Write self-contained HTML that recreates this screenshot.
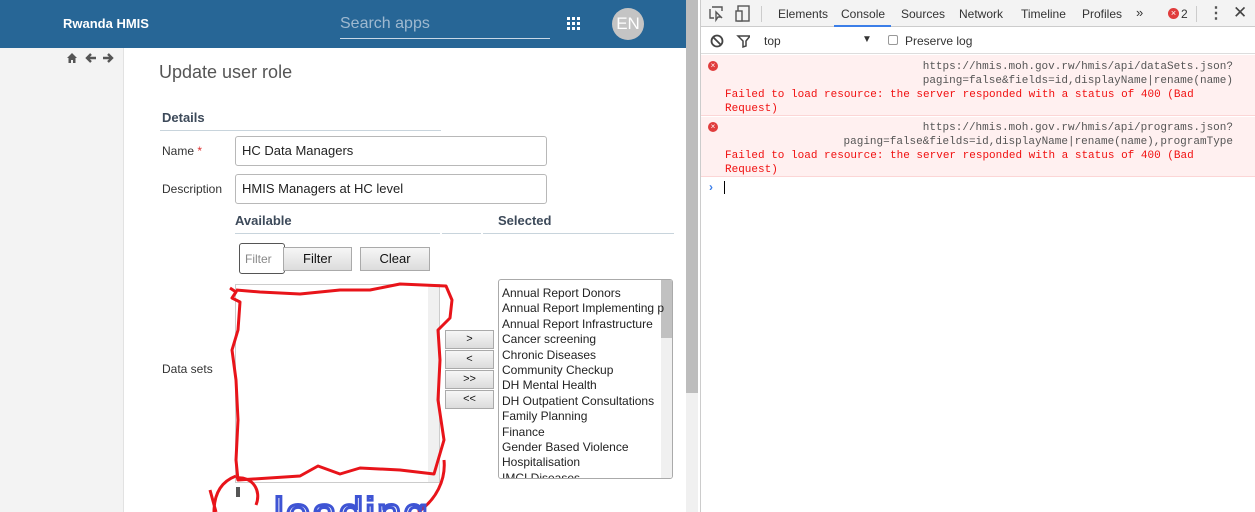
<!DOCTYPE html>
<html><head><style>
*{box-sizing:border-box;margin:0;padding:0}
body{width:1255px;height:512px;overflow:hidden;font-family:"Liberation Sans",sans-serif;background:#fff;position:relative}
.a{position:absolute}
.inp{position:absolute;border:1px solid #b8b8b8;border-radius:3px;background:#fff;font-size:13px;padding-left:6px;line-height:28px;color:#222}
.btn{position:absolute;border:1px solid #aaa;background:linear-gradient(#f6f6f6,#dcdcdc);font-size:13px;text-align:center;color:#111}
.mono{font-family:"Liberation Mono",monospace;font-size:11px}
</style></head><body>
<div class="a" style="left:0;top:0;width:686px;height:48px;background:#276696"></div>
<div class="a" style="left:63px;top:16px;color:#fff;font-weight:bold;font-size:13px">Rwanda HMIS</div>
<div class="a" style="left:340px;top:15px;color:#9fb9d0;font-size:16px">Search apps</div>
<div class="a" style="left:340px;top:38px;width:210px;height:1px;background:#c9d8e6"></div>
<svg class="a" style="left:566px;top:16px" width="16" height="16"><g fill="#fff"><rect x="1" y="1" width="3" height="3"/><rect x="6" y="1" width="3" height="3"/><rect x="11" y="1" width="3" height="3"/><rect x="1" y="6" width="3" height="3"/><rect x="6" y="6" width="3" height="3"/><rect x="11" y="6" width="3" height="3"/><rect x="1" y="11" width="3" height="3"/><rect x="6" y="11" width="3" height="3"/><rect x="11" y="11" width="3" height="3"/></g></svg>
<div class="a" style="left:612px;top:8px;width:32px;height:32px;border-radius:50%;background:#c4c4c4;color:#fff;font-size:17px;text-align:center;line-height:32px">EN</div>
<div class="a" style="left:0;top:48px;width:124px;height:464px;background:#f3f3f3;border-right:1px solid #e2e2e2"></div>
<svg class="a" style="left:66px;top:52px" width="52" height="12"><path d="M1 6 L6 1 L11 6 H9.5 V11 H7 V8 H5 V11 H2.5 V6 Z" fill="#555"/><path d="M30 6 H21 M25 2 L21 6 L25 10" fill="none" stroke="#555" stroke-width="2.4"/><path d="M37 6 H46 M42 2 L46 6 L42 10" fill="none" stroke="#555" stroke-width="2.4"/></svg>
<div class="a" style="left:686px;top:0;width:12px;height:512px;background:#f0f0f0"></div>
<div class="a" style="left:686px;top:0;width:12px;height:393px;background:#bdbdbd"></div>
<div class="a" style="left:698px;top:0;width:2px;height:512px;background:#fff"></div>
<div class="a" style="left:700px;top:0;width:1px;height:512px;background:#ccc"></div>
<div class="a" style="left:159px;top:62px;font-size:18px;color:#555">Update user role</div>
<div class="a" style="left:162px;top:110px;font-size:13px;font-weight:bold;color:#3d4a5a">Details</div>
<div class="a" style="left:160px;top:130px;width:281px;height:1px;background:#c8d4dc"></div>
<div class="a" style="left:162px;top:144px;font-size:12px;color:#333">Name <span style="color:#d33">*</span></div>
<div class="inp" style="left:235px;top:136px;width:312px;height:30px">HC Data Managers</div>
<div class="a" style="left:162px;top:182px;font-size:12px;color:#333">Description</div>
<div class="inp" style="left:235px;top:174px;width:312px;height:30px">HMIS Managers at HC level</div>
<div class="a" style="left:235px;top:213px;font-size:13px;font-weight:bold;color:#3d4a5a">Available</div>
<div class="a" style="left:498px;top:213px;font-size:13px;font-weight:bold;color:#3d4a5a">Selected</div>
<div class="a" style="left:235px;top:233px;width:205px;height:1px;background:#c8d4dc"></div>
<div class="a" style="left:442px;top:233px;width:39px;height:1px;background:#c8d4dc"></div>
<div class="a" style="left:483px;top:233px;width:191px;height:1px;background:#c8d4dc"></div>
<div class="inp" style="left:239px;top:243px;width:46px;height:31px;color:#888;padding-left:5px;line-height:30px;font-size:12px;border-color:#555">Filter</div>
<div class="btn" style="left:283px;top:247px;width:69px;height:24px;line-height:22px">Filter</div>
<div class="btn" style="left:360px;top:247px;width:70px;height:24px;line-height:22px">Clear</div>
<div class="a" style="left:162px;top:362px;font-size:12px;color:#333">Data sets</div>
<div class="a" style="left:235px;top:284px;width:205px;height:199px;border:1px solid #ccc;background:#fff"></div>
<div class="a" style="left:428px;top:285px;width:11px;height:197px;background:#f0f0f0"></div>
<div class="a" style="left:236px;top:487px;width:4px;height:10px;background:#555"></div>
<div class="btn" style="left:445px;top:330px;width:49px;height:19px;line-height:17px;font-size:11px">&gt;</div>
<div class="btn" style="left:445px;top:350px;width:49px;height:19px;line-height:17px;font-size:11px">&lt;</div>
<div class="btn" style="left:445px;top:370px;width:49px;height:19px;line-height:17px;font-size:11px">&gt;&gt;</div>
<div class="btn" style="left:445px;top:390px;width:49px;height:19px;line-height:17px;font-size:11px">&lt;&lt;</div>
<div class="a" style="left:498px;top:279px;width:175px;height:200px;border:1px solid #aaa;border-radius:3px;overflow:hidden;background:#fff">
<div style="position:absolute;right:0;top:0;width:11px;height:200px;background:#f0f0f0"></div>
<div style="position:absolute;right:0;top:0;width:11px;height:58px;background:#c1c1c1"></div>
<div style="position:absolute;left:3px;top:6px;width:162px;overflow:hidden;white-space:nowrap;font-size:12px;line-height:15.4px;color:#222">Annual Report Donors<br>Annual Report Implementing partners<br>Annual Report Infrastructure<br>Cancer screening<br>Chronic Diseases<br>Community Checkup<br>DH Mental Health<br>DH Outpatient Consultations<br>Family Planning<br>Finance<br>Gender Based Violence<br>Hospitalisation<br>IMCI Diseases</div></div>
<svg class="a" style="left:0;top:0" width="700" height="512">
<path d="M230 288 L236 292 L232 298 L240 302 L238 330 L232 350 L236 380 L238 420 L236 460 L238 480 L300 476 L318 466 L340 474 L360 468 L400 470 L434 474 L444 440 L438 400 L440 360 L438 330 L450 318 L452 300 L446 286 L400 284 L370 290 L340 290 L300 294 L260 292 L236 290" fill="none" stroke="#e8141a" stroke-width="3" stroke-linejoin="round"/>
<path d="M236 478 C252 476 262 490 256 505 M236 476 C220 482 214 495 214 512 M210 490 L216 512" fill="none" stroke="#e8141a" stroke-width="3"/>
<path d="M444 460 C446 480 436 500 418 512" fill="none" stroke="#e8141a" stroke-width="3"/>
<text x="274" y="528" font-family="Liberation Sans,sans-serif" font-size="44" fill="none" stroke="#3e54d4" stroke-width="3" letter-spacing="2">loading</text>
</svg>
<div class="a" style="left:701px;top:0;width:554px;height:27px;background:#f3f3f3;border-bottom:1px solid #ccc"></div>
<svg class="a" style="left:708px;top:5px" width="45" height="18"><path d="M4 2 H14 V6 M2 4 V13 H6 M8 7 L14 13 M8 7 L8 15 L10 12 L13 12 Z" fill="none" stroke="#555" stroke-width="1.4"/><rect x="30" y="1" width="11" height="15" fill="none" stroke="#555" stroke-width="1.4"/><rect x="28" y="6" width="6" height="10" fill="#f3f3f3" stroke="#555" stroke-width="1.4"/></svg>
<div class="a" style="left:761px;top:6px;width:1px;height:16px;background:#ccc"></div>
<div class="a" style="left:778px;top:7px;font-size:12px;color:#333">Elements</div>
<div class="a" style="left:841px;top:7px;font-size:12px;color:#333">Console</div>
<div class="a" style="left:834px;top:25px;width:57px;height:2px;background:#3b7ee8"></div>
<div class="a" style="left:901px;top:7px;font-size:12px;color:#333">Sources</div>
<div class="a" style="left:959px;top:7px;font-size:12px;color:#333">Network</div>
<div class="a" style="left:1021px;top:7px;font-size:12px;color:#333">Timeline</div>
<div class="a" style="left:1082px;top:7px;font-size:12px;color:#333">Profiles</div>
<div class="a" style="left:1136px;top:5px;font-size:13px;color:#333">»</div>
<div class="a" style="left:1168px;top:8px;width:11px;height:11px;border-radius:50%;background:#e03c3c;color:#fff;font-size:9px;text-align:center;line-height:11px">×</div>
<div class="a" style="left:1181px;top:7px;font-size:12px;color:#333">2</div>
<div class="a" style="left:1196px;top:6px;width:1px;height:16px;background:#ccc"></div>
<div class="a" style="left:1208px;top:3px;font-size:16px;color:#555;font-weight:bold">⋮</div>
<div class="a" style="left:1233px;top:3px;font-size:17px;color:#444">✕</div>
<div class="a" style="left:701px;top:28px;width:554px;height:26px;border-bottom:1px solid #ddd;background:#fff"></div>
<svg class="a" style="left:710px;top:33px" width="40" height="16"><circle cx="7" cy="8" r="5.5" fill="none" stroke="#444" stroke-width="1.8"/><path d="M3 4 L11 12" stroke="#444" stroke-width="1.8"/><path d="M28 3 H40 L36 8 V13 L33 14 V8 Z" fill="none" stroke="#444" stroke-width="1.5"/></svg>
<div class="a" style="left:764px;top:34px;font-size:12px;color:#333">top</div>
<div class="a" style="left:862px;top:34px;font-size:10px;color:#333">▼</div>
<div class="a" style="left:888px;top:35px;width:10px;height:10px;border:1px solid #999;border-radius:2px"></div>
<div class="a" style="left:905px;top:34px;font-size:12px;color:#333">Preserve log</div>
<div class="a" style="left:701px;top:55px;width:554px;height:61px;background:#fff0f0;border-bottom:1px solid #fcd6d6"></div>
<div class="a" style="left:701px;top:117px;width:554px;height:60px;background:#fff0f0;border-bottom:1px solid #fcd6d6"></div>
<div class="a" style="left:708px;top:61px;width:10px;height:10px;border-radius:50%;background:#e03c3c;color:#fff;font-size:8px;text-align:center;line-height:10px">×</div>
<div class="a" style="left:708px;top:122px;width:10px;height:10px;border-radius:50%;background:#e03c3c;color:#fff;font-size:8px;text-align:center;line-height:10px">×</div>
<div class="a mono" style="right:22px;top:60px;color:#555;text-align:right;line-height:14px">https://hmis.moh.gov.rw/hmis/api/dataSets.json?<br>paging=false&amp;fields=id,displayName|rename(name)</div>
<div class="a mono" style="left:725px;top:88px;color:#f01010;line-height:14px">Failed to load resource: the server responded with a status of 400 (Bad<br>Request)</div>
<div class="a mono" style="right:22px;top:121px;color:#555;text-align:right;line-height:14px">https://hmis.moh.gov.rw/hmis/api/programs.json?<br>paging=false&amp;fields=id,displayName|rename(name),programType</div>
<div class="a mono" style="left:725px;top:149px;color:#f01010;line-height:14px">Failed to load resource: the server responded with a status of 400 (Bad<br>Request)</div>
<div class="a" style="left:709px;top:180px;color:#3b7ee8;font-size:12px;font-weight:bold">›</div>
<div class="a" style="left:724px;top:181px;width:1px;height:13px;background:#000"></div>
</body></html>
